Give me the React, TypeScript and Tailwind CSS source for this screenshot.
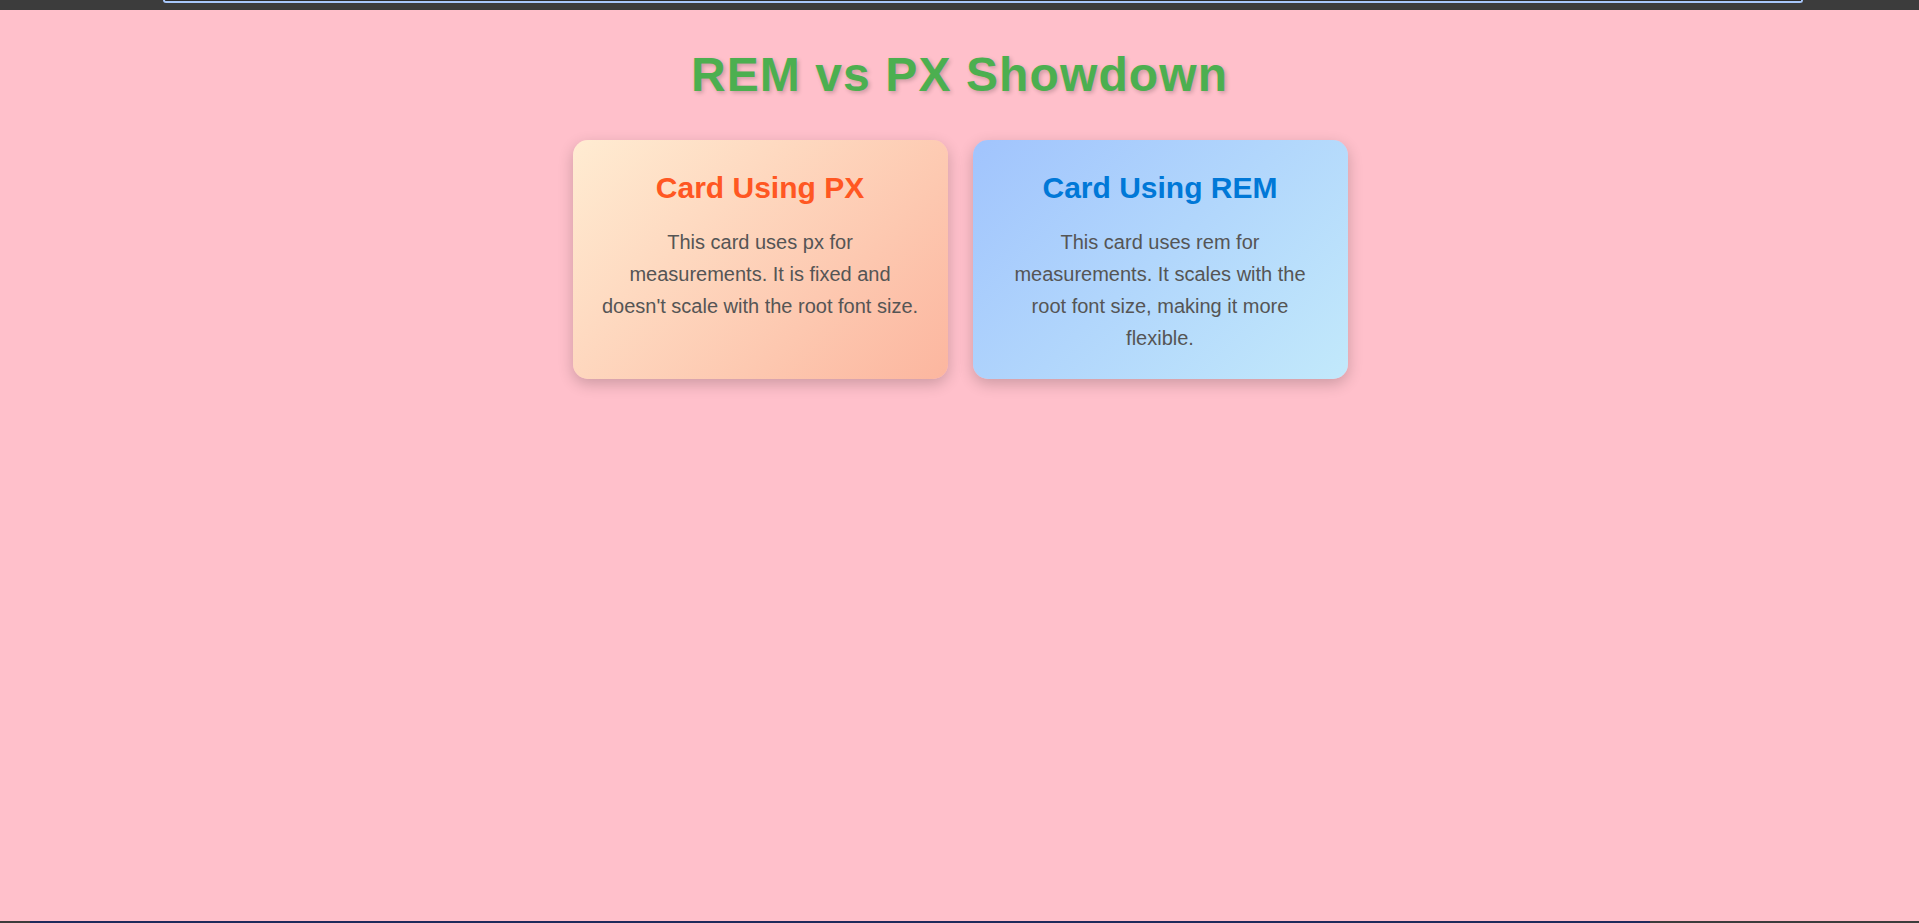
const cards = [
  {
    title: "Card Using PX",
    body: "This card uses px for measurements. It is fixed and doesn't scale with the root font size.",
    bg: "bg-[linear-gradient(135deg,#ffecd2_0%,#fcb69f_100%)]",
    color: "text-[#ff5722]",
  },
  {
    title: "Card Using REM",
    body: "This card uses rem for measurements. It scales with the root font size, making it more flexible.",
    bg: "bg-[linear-gradient(135deg,#a1c4fd_0%,#c2e9fb_100%)]",
    color: "text-[#0078d7]",
  },
];

export default function App() {
  return (
    <div className="flex h-[923px] flex-col bg-[#ffc0cb] font-['Liberation_Sans',Arial,sans-serif]">
      {/* browser chrome strip */}
      <div className="h-[10px] flex-none bg-[#3c3c3c] pl-[163px] pr-[116px]">
        <div className="h-[3px] rounded-b-[4px] border-x-2 border-b-2 border-[#a8c7fa] bg-[#2b2b2b]" />
      </div>

      <main className="flex-1 pt-[37px]">
        <h1 className="text-center text-[48px] font-bold leading-[55px] tracking-[1.1px] text-[#4caf50] [text-shadow:2px_2px_4px_rgba(0,0,0,0.2)]">
          REM vs PX Showdown
        </h1>

        <div className="mt-[38px] flex justify-center gap-[25px] pl-px">
          {cards.map((c) => (
            <div
              key={c.title}
              className={`w-[375px] rounded-[15px] px-[26px] pt-[31px] pb-[25px] text-center shadow-[0_5px_15px_rgba(0,0,0,0.2)] ${c.bg}`}
            >
              <h2 className={`mb-5 text-[30px] font-bold leading-[34.5px] ${c.color}`}>{c.title}</h2>
              <p className="text-[20px] leading-[32px] text-[#555]">{c.body}</p>
            </div>
          ))}
        </div>
      </main>

      <div className="flex h-[2px] flex-none bg-[#3c3c3c] pl-[30px]">
        <div className="h-full w-[1620px] bg-[#1f2a5c]" />
      </div>
    </div>
  );
}
